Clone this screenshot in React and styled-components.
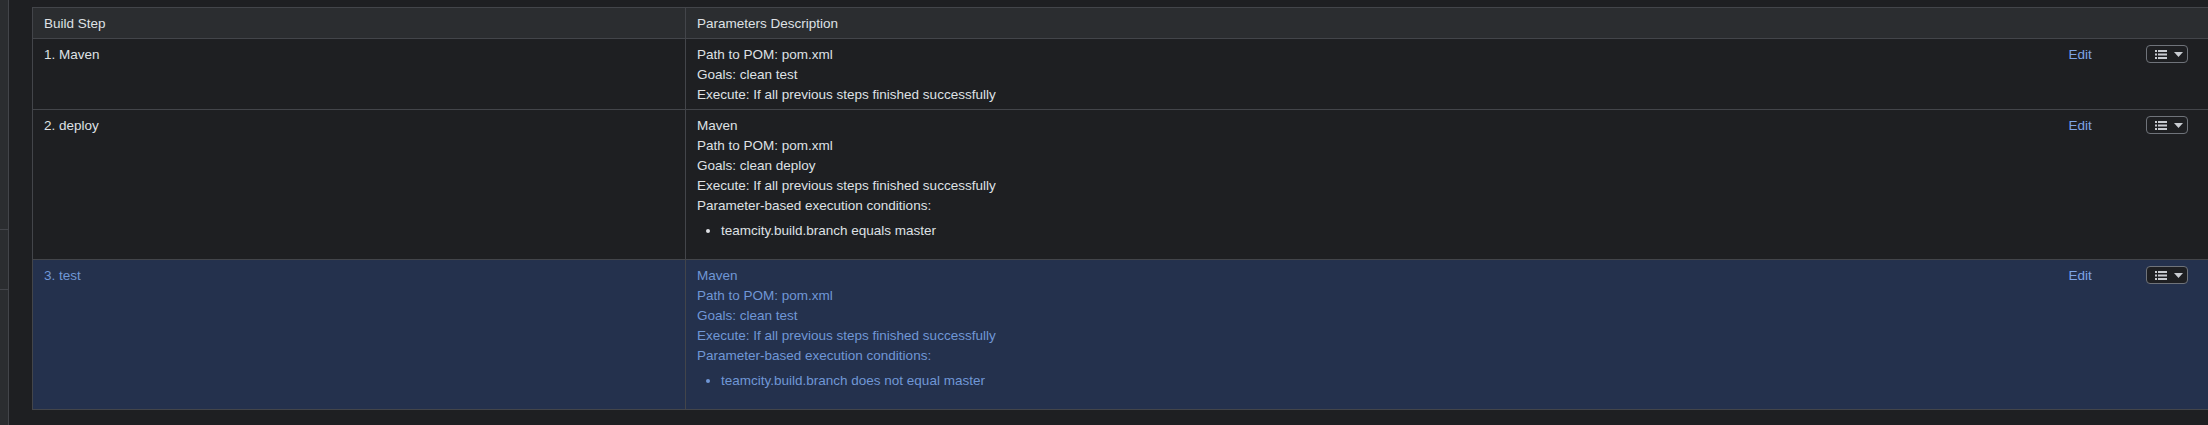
import React from "react";
import styled, { createGlobalStyle } from "styled-components";

const GlobalStyle = createGlobalStyle`
  html, body {
    margin: 0;
    padding: 0;
    background: #1e1f22;
    overflow: hidden;
  }
  body {
    font-family: "Liberation Sans", Arial, sans-serif;
    font-size: 13.5px;
    color: #dfe1e5;
  }
`;

const Page = styled.div`
  display: flex;
  height: 425px;
  background: #1e1f22;
`;

const Sidebar = styled.div`
  width: 8px;
  flex: none;
  display: flex;
  flex-direction: column;
  background: #2b2d30;
  border-right: 1px solid #43454a;
`;

const SidebarSection = styled.div`
  height: ${(p) => (p.$h ? `${p.$h}px` : "auto")};
  flex: ${(p) => (p.$h ? "none" : "1")};
  border-bottom: ${(p) => (p.$h ? "1px solid #43454a" : "none")};
`;

const Content = styled.div`
  flex: 1;
  padding: 7px 0 0 23px;
  min-width: 0;
`;

const Table = styled.table`
  width: 2177px;
  border-collapse: collapse;
  table-layout: fixed;
  border: 1px solid #43454a;
`;

const HeadCell = styled.th`
  background: #2b2d30;
  font-weight: normal;
  text-align: left;
  padding: 6px 11px 4px;
  line-height: 20px;
  color: #dfe1e5;
  border: 1px solid #43454a;
  border-right: ${(p) => (p.$last ? "none" : "1px solid #43454a")};
`;

const Row = styled.tr`
  background: ${(p) => (p.$selected ? "#24314d" : "#1e1f22")};
  color: ${(p) => (p.$selected ? "#7097d6" : "#dfe1e5")};
  border-top: 1px solid #43454a;
`;

const Cell = styled.td`
  vertical-align: top;
  padding: 6px 11px 4px;
  line-height: 20px;
  border-left: ${(p) => (p.$divider ? "1px solid #43454a" : "none")};
`;

const Line = styled.div`
  white-space: nowrap;
`;

const Conditions = styled.ul`
  margin: 5px 0 14px;
  padding-left: 24px;
  list-style: disc;
`;

const EditLink = styled.a`
  color: #7ea4e6;
  text-decoration: none;
  cursor: pointer;
`;

const MenuButton = styled.button`
  margin-top: 0;
  width: 42px;
  height: 18px;
  padding: 0 0 0 8px;
  display: flex;
  align-items: center;
  gap: 7px;
  background: #1e1f22;
  border: 1px solid #6f737a;
  border-radius: 4px;
  cursor: pointer;
`;

const ListIcon = () => (
  <svg width="12" height="9" viewBox="0 0 12 9" fill="#c9ccd1">
    <rect x="0" y="0" width="2" height="2" />
    <rect x="3" y="0" width="9" height="2" />
    <rect x="0" y="3.5" width="2" height="2" />
    <rect x="3" y="3.5" width="9" height="2" />
    <rect x="0" y="7" width="2" height="2" />
    <rect x="3" y="7" width="9" height="2" />
  </svg>
);

const Caret = () => (
  <svg width="9" height="5" viewBox="0 0 9 5" fill="#c9ccd1">
    <path d="M0 0 H9 L4.5 5 Z" />
  </svg>
);

const steps = [
  {
    name: "1. Maven",
    lines: [
      "Path to POM: pom.xml",
      "Goals: clean test",
      "Execute: If all previous steps finished successfully",
    ],
  },
  {
    name: "2. deploy",
    lines: [
      "Maven",
      "Path to POM: pom.xml",
      "Goals: clean deploy",
      "Execute: If all previous steps finished successfully",
      "Parameter-based execution conditions:",
    ],
    conditions: ["teamcity.build.branch equals master"],
  },
  {
    name: "3. test",
    selected: true,
    lines: [
      "Maven",
      "Path to POM: pom.xml",
      "Goals: clean test",
      "Execute: If all previous steps finished successfully",
      "Parameter-based execution conditions:",
    ],
    conditions: ["teamcity.build.branch does not equal master"],
  },
];

export default function App() {
  return (
    <>
      <GlobalStyle />
      <Page>
        <Sidebar>
          <SidebarSection $h={229} />
          <SidebarSection $h={59} />
          <SidebarSection />
        </Sidebar>
        <Content>
          <Table>
            <colgroup>
              <col style={{ width: 653 }} />
              <col />
              <col style={{ width: 77 }} />
              <col style={{ width: 74 }} />
            </colgroup>
            <thead>
              <tr>
                <HeadCell>Build Step</HeadCell>
                <HeadCell colSpan={3} $last>
                  Parameters Description
                </HeadCell>
              </tr>
            </thead>
            <tbody>
              {steps.map((s) => (
                <Row key={s.name} $selected={s.selected}>
                  <Cell>{s.name}</Cell>
                  <Cell $divider>
                    {s.lines.map((l) => (
                      <Line key={l}>{l}</Line>
                    ))}
                    {s.conditions && (
                      <Conditions>
                        {s.conditions.map((c) => (
                          <li key={c}>{c}</li>
                        ))}
                      </Conditions>
                    )}
                  </Cell>
                  <Cell>
                    <EditLink>Edit</EditLink>
                  </Cell>
                  <Cell>
                    <MenuButton aria-label="More actions">
                      <ListIcon />
                      <Caret />
                    </MenuButton>
                  </Cell>
                </Row>
              ))}
            </tbody>
          </Table>
        </Content>
      </Page>
    </>
  );
}
